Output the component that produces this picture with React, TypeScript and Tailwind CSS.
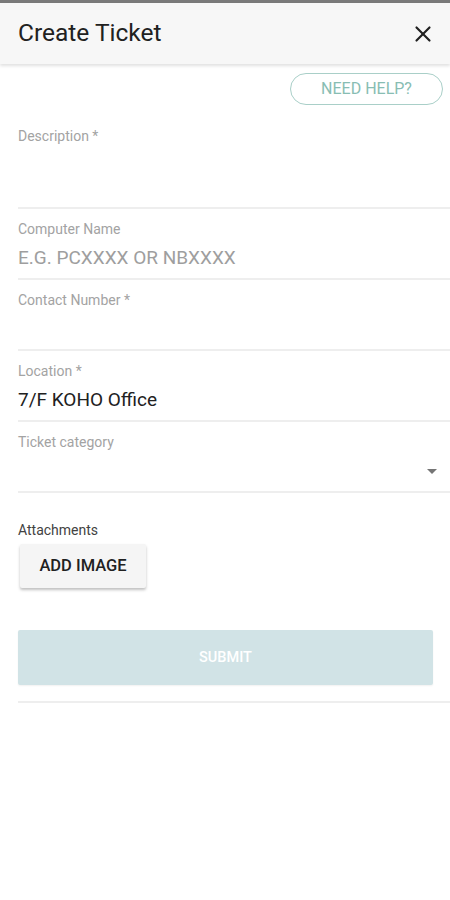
import { X } from "lucide-react";

const fields = [
  { label: "Computer Name", value: "E.G. PCXXXX OR NBXXXX", muted: true },
  { label: "Contact Number *", value: "", muted: false },
  { label: "Location *", value: "7/F KOHO Office", muted: false },
];

function Field({ label, value, muted }: { label: string; value: string; muted: boolean }) {
  return (
    <div className="border-b-2 border-[#eeeeee] pt-[12px] pb-[8px]">
      <div className="text-[14px] leading-[16px] text-[#a3a3a3]">{label}</div>
      <div
        className={`mt-[9px] h-[24px] text-[19px] leading-[24px] ${
          muted ? "text-[#9e9e9e]" : "text-[#212121]"
        }`}
      >
        {value}
      </div>
    </div>
  );
}

export default function App() {
  return (
    <div className="min-h-[900px] bg-white font-['Roboto',sans-serif]">
      {/* status strip */}
      <div className="h-[3px] bg-[#7a7a7a]" />

      {/* Header */}
      <header className="relative z-10 flex h-[61px] items-center justify-between bg-[#f7f7f7] pl-[18px] pr-[14px] shadow-[0_2px_3px_rgba(0,0,0,0.12)]">
        <h1 className="text-[24.5px] font-normal text-[#212121]">Create Ticket</h1>
        <X className="h-[26px] w-[26px] text-[#212121]" strokeWidth={2} />
      </header>

      <main className="pl-[18px]">
        <div className="flex justify-end pt-[9px] pr-[7px]">
          <button className="flex h-[32px] w-[153px] items-center justify-center rounded-full border border-[#a9cfc8] text-[16px] font-normal text-[#88bdb3]">
            NEED HELP?
          </button>
        </div>

        {/* Description */}
        <div className="mt-[23px] h-[81px] border-b-2 border-[#eeeeee]">
          <div className="text-[14px] leading-[16px] text-[#a3a3a3]">Description *</div>
        </div>

        {fields.map((f) => (
          <Field key={f.label} {...f} />
        ))}

        {/* Ticket category */}
        <div className="border-b-2 border-[#eeeeee] pt-[12px] pb-[8px]">
          <div className="text-[14px] leading-[16px] text-[#a3a3a3]">Ticket category</div>
          <div className="mt-[9px] flex h-[24px] items-center justify-end pr-[13px]">
            <div className="h-0 w-0 border-x-[5px] border-t-[5px] border-x-transparent border-t-[#757575]" />
          </div>
        </div>

        {/* Attachments */}
        <div className="mt-[29px] text-[14px] leading-[16px] text-[#424242]">Attachments</div>
        <button className="ml-[2px] mt-[6px] flex h-[44px] w-[126px] items-center justify-center rounded-[2px] bg-[#f5f5f5] text-[16.5px] font-medium text-[#212121] shadow-[0_2px_3px_rgba(0,0,0,0.25)]">
          ADD IMAGE
        </button>

        <div className="pr-[17px] pt-[42px]">
          <button className="flex h-[55px] w-full items-center justify-center rounded-[2px] bg-[#d1e3e6] text-[14.5px] font-medium text-white shadow-[0_1px_2px_rgba(0,0,0,0.06)]">
            SUBMIT
          </button>
        </div>

        <div className="mt-[16px] border-b-2 border-[#eeeeee]" />
      </main>
    </div>
  );
}
